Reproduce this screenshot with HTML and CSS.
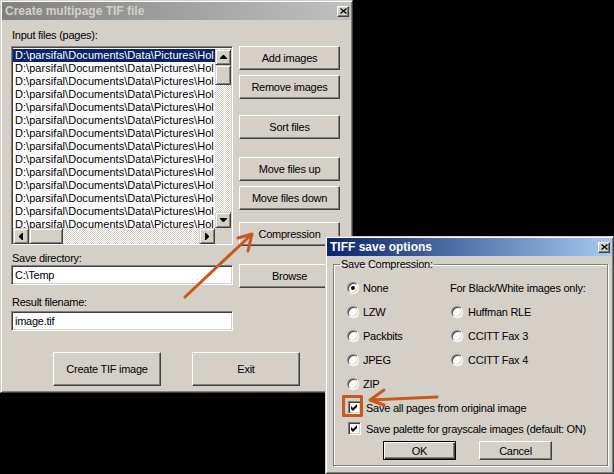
FILE: index.html
```html
<!DOCTYPE html>
<html>
<head>
<meta charset="utf-8">
<link rel="stylesheet" href="styles.css">
</head>
<body>
<div class="desktop">
  <div class="win win-main">
    <div class="titlebar inactive">
      <span class="title">Create multipage TIF file</span>
      <span class="close"><svg width="7" height="6" viewBox="0 0 7 6"><path d="M0.5 0.5 L6.5 5.5 M6.5 0.5 L0.5 5.5" stroke="#000" stroke-width="1.3"/></svg></span>
    </div>
    <div class="main-body">
      <div class="cols">
        <div class="left">
          <div class="label mt9">Input files (pages):</div>
          <div class="listbox mt4">
            <div class="items">
              <div class="item sel">D:\parsifal\Documents\Data\Pictures\Hol</div>
              <div class="item">D:\parsifal\Documents\Data\Pictures\Hol</div>
              <div class="item">D:\parsifal\Documents\Data\Pictures\Hol</div>
              <div class="item">D:\parsifal\Documents\Data\Pictures\Hol</div>
              <div class="item">D:\parsifal\Documents\Data\Pictures\Hol</div>
              <div class="item">D:\parsifal\Documents\Data\Pictures\Hol</div>
              <div class="item">D:\parsifal\Documents\Data\Pictures\Hol</div>
              <div class="item">D:\parsifal\Documents\Data\Pictures\Hol</div>
              <div class="item">D:\parsifal\Documents\Data\Pictures\Hol</div>
              <div class="item">D:\parsifal\Documents\Data\Pictures\Hol</div>
              <div class="item">D:\parsifal\Documents\Data\Pictures\Hol</div>
              <div class="item">D:\parsifal\Documents\Data\Pictures\Hol</div>
              <div class="item">D:\parsifal\Documents\Data\Pictures\Hol</div>
              <div class="item">D:\parsifal\Documents\Data\Pictures\Hol</div>
            </div>
            <div class="vscroll">
              <div class="sbtn"><svg width="7" height="4" viewBox="0 0 7 4"><path d="M3 0h1l3 3v1H0V3z"/></svg></div>
              <div class="sthumb v"></div>
              <div class="track"></div>
              <div class="sbtn"><svg width="7" height="4" viewBox="0 0 7 4"><path d="M0 0h7v1L4 4H3L0 1z"/></svg></div>
            </div>
            <div class="hscroll">
              <div class="sbtn"><svg width="4" height="7" viewBox="0 0 4 7"><path d="M0 3v1l3 3h1V0H3z"/></svg></div>
              <div class="sthumb h"></div>
              <div class="track"></div>
              <div class="sbtn"><svg width="4" height="7" viewBox="0 0 4 7"><path d="M0 0v7h1l3-3V3L1 0z"/></svg></div>
            </div>
            <div class="corner"></div>
          </div>
          <div class="label mt7">Save directory:</div>
          <div class="field">C:\Temp</div>
          <div class="label mt11">Result filename:</div>
          <div class="field mt2">image.tif</div>
        </div>
        <div class="right">
          <div class="btn mt26">Add images</div>
          <div class="btn mt5">Remove images</div>
          <div class="btn mt16">Sort files</div>
          <div class="btn mt18">Move files up</div>
          <div class="btn mt5">Move files down</div>
          <div class="btn mt12">Compression</div>
          <div class="btn mt18">Browse</div>
        </div>
      </div>
      <div class="bottom-row">
        <div class="btn big">Create TIF image</div>
        <div class="btn big">Exit</div>
      </div>
    </div>
  </div>

  <div class="win win-dialog">
    <div class="titlebar active">
      <span class="title">TIFF save options</span>
      <span class="close"><svg width="7" height="6" viewBox="0 0 7 6"><path d="M0.5 0.5 L6.5 5.5 M6.5 0.5 L0.5 5.5" stroke="#000" stroke-width="1.3"/></svg></span>
    </div>
    <div class="dlg-body">
      <fieldset class="group">
        <legend>Save Compression:</legend>
        <div class="opts">
          <div class="opt"><span class="radio on"></span>None</div>
          <div class="opt note">For Black/White images only:</div>
          <div class="opt"><span class="radio"></span>LZW</div>
          <div class="opt r"><span class="radio"></span>Huffman RLE</div>
          <div class="opt"><span class="radio"></span>Packbits</div>
          <div class="opt r"><span class="radio"></span>CCITT Fax 3</div>
          <div class="opt"><span class="radio"></span>JPEG</div>
          <div class="opt r"><span class="radio"></span>CCITT Fax 4</div>
          <div class="opt"><span class="radio"></span>ZIP</div>
          <div class="opt"></div>
        </div>
        <div class="checks">
          <div class="chk"><span class="box"><svg width="7" height="7" viewBox="0 0 7 7"><path d="M0 2L2 4L6 0V3L2 7L0 5Z"/></svg></span>Save all pages from original image</div>
          <div class="chk"><span class="box"><svg width="7" height="7" viewBox="0 0 7 7"><path d="M0 2L2 4L6 0V3L2 7L0 5Z"/></svg></span>Save palette for grayscale images (default: ON)</div>
        </div>
        <div class="dlg-btns">
          <div class="btn dlg default">OK</div>
          <div class="btn dlg">Cancel</div>
        </div>
      </fieldset>
    </div>
  </div>

  <svg class="annot" width="614" height="474" viewBox="0 0 614 474">
    <g fill="none" stroke="#c8581b" stroke-width="3" stroke-linecap="round" stroke-linejoin="round">
      <path d="M185 297 L252 234 M252 234 L238 238 M252 234 L248 251"/>
      <path d="M437 397 L370 400 M370 400 L384 390 M370 400 L384 405"/>
      <rect x="343.5" y="396.5" width="18" height="19" stroke-linecap="butt"/>
    </g>
  </svg>
</div>
</body>
</html>
```

FILE: styles.css
```css
html, body {
  margin: 0;
  padding: 0;
}
body {
  background: #000;
  width: 614px;
  height: 474px;
  overflow: hidden;
  font-family: "Liberation Sans", Arial, sans-serif;
  font-size: 11px;
  letter-spacing: -0.25px;
  color: #000;
}
.desktop {
  position: relative;
  width: 614px;
  height: 474px;
}
.win {
  position: absolute;
  box-sizing: border-box;
  background: #d4d0c8;
  border: 1px solid;
  border-color: #d4d0c8 #404040 #404040 #d4d0c8;
  box-shadow: inset 1px 1px #fff, inset -1px -1px #808080;
  padding: 1px;
  display: flex;
  flex-direction: column;
}
.win-main {
  left: 0;
  top: 0;
  width: 353px;
  height: 393px;
}
.win-dialog {
  left: 325px;
  top: 236px;
  width: 289px;
  height: 238px;
}
.titlebar {
  height: 18px;
  flex: none;
  display: flex;
  align-items: center;
  justify-content: space-between;
  padding: 0 2px 0 3px;
  font-weight: bold;
  font-size: 12px;
  letter-spacing: 0;
  white-space: nowrap;
}
.titlebar.inactive {
  background: linear-gradient(to right, #808080, #c0c0c0);
  color: #d4d0c8;
}
.titlebar.active {
  background: linear-gradient(to right, #0a246a, #a6caf0);
  color: #fff;
}
.close {
  width: 12px;
  height: 11px;
  box-sizing: border-box;
  background: #d4d0c8;
  border: 1px solid;
  border-color: #fff #404040 #404040 #fff;
  box-shadow: inset -1px -1px #808080;
  display: flex;
  align-items: center;
  justify-content: center;
}
.close svg { display: block; }

/* main window */
.main-body {
  padding-left: 9px;
}
.cols {
  display: flex;
  gap: 6px;
  align-items: flex-start;
}
.left {
  width: 222px;
  display: flex;
  flex-direction: column;
}
.right {
  width: 101px;
  display: flex;
  flex-direction: column;
}
.label {
  height: 13px;
  line-height: 13px;
  padding-left: 1px;
  white-space: nowrap;
}
.mt2 { margin-top: 2px; }
.mt4 { margin-top: 4px; }
.mt5 { margin-top: 5px; }
.mt7 { margin-top: 7px; }
.mt9 { margin-top: 9px; }
.mt11 { margin-top: 11px; }
.mt12 { margin-top: 12px; }
.mt16 { margin-top: 16px; }
.mt18 { margin-top: 18px; }
.mt26 { margin-top: 26px; }

.btn {
  box-sizing: border-box;
  background: #d4d0c8;
  border: 1px solid;
  border-color: #fff #404040 #404040 #fff;
  box-shadow: inset -1px -1px #808080;
  display: flex;
  align-items: center;
  justify-content: center;
  height: 24px;
  white-space: nowrap;
}
.btn.big {
  width: 108px;
  height: 34px;
}
.bottom-row {
  display: flex;
  gap: 31px;
  margin-top: 21px;
  padding-left: 42px;
}

.field {
  height: 20px;
  box-sizing: border-box;
  background: #fff;
  border: 1px solid;
  border-color: #808080 #fff #fff #808080;
  box-shadow: inset 1px 1px #404040, inset -1px -1px #d4d0c8;
  padding: 0 3px;
  display: flex;
  align-items: center;
  white-space: nowrap;
}

.listbox {
  width: 222px;
  height: 199px;
  box-sizing: border-box;
  background: #fff;
  border: 1px solid;
  border-color: #808080 #fff #fff #808080;
  box-shadow: inset 1px 1px #404040, inset -1px -1px #d4d0c8;
  padding: 2px 1px 0 1px;
  display: grid;
  grid-template-columns: 1fr 16px;
  grid-template-rows: 1fr 16px;
}
.items {
  overflow: hidden;
  min-width: 0;
  min-height: 0;
}
.item {
  height: 13px;
  line-height: 13px;
  padding-left: 2px;
  white-space: nowrap;
  overflow: hidden;
  letter-spacing: 0.05px;
}
.item.sel {
  background: #0a246a;
  color: #fff;
}
.vscroll {
  display: flex;
  flex-direction: column;
  min-height: 0;
}
.hscroll {
  display: flex;
  min-width: 0;
}
.track {
  flex: 1;
  background: repeating-conic-gradient(#d4d0c8 0 25%, #fff 0 50%) 0 0 / 2px 2px;
}
.sbtn, .sthumb {
  box-sizing: border-box;
  background: #d4d0c8;
  border: 1px solid;
  border-color: #d4d0c8 #404040 #404040 #d4d0c8;
  box-shadow: inset 1px 1px #fff, inset -1px -1px #808080;
  flex: none;
}
.sbtn {
  width: 16px;
  height: 16px;
  display: flex;
  align-items: center;
  justify-content: center;
}
.sbtn svg { display: block; }
.sthumb.v {
  width: 16px;
  height: 20px;
}
.sthumb.h {
  width: 34px;
  height: 16px;
}
.corner {
  background: #d4d0c8;
}

/* dialog */
.dlg-body {
  padding: 2px 4px 0 6px;
}
.group {
  margin: 0;
  padding: 0 0 5px 0;
  border: 1px solid #808080;
  box-shadow: 1px 1px 0 #fff, inset 1px 1px 0 #fff;
  min-width: 0;
}
.group legend {
  margin-left: 6px;
  padding: 0 1px;
  line-height: 13px;
  height: 13px;
}
.opts {
  display: grid;
  grid-template-columns: 103px 1fr;
  grid-auto-rows: 24px;
  margin-top: 5px;
  padding-left: 13px;
}
.opt {
  display: flex;
  align-items: center;
  white-space: nowrap;
}
.opt.r .radio {
  margin-left: 1px;
  margin-right: 5px;
}
.radio {
  width: 12px;
  height: 12px;
  box-sizing: border-box;
  border-radius: 50%;
  background: #fff;
  border: 1px solid;
  border-color: #808080 #fff #fff #808080;
  box-shadow: inset 1px 1px #404040, inset -1px -1px #d4d0c8;
  margin-right: 4px;
  display: flex;
  align-items: center;
  justify-content: center;
  flex: none;
}
.radio.on::after {
  content: "";
  width: 4px;
  height: 4px;
  border-radius: 50%;
  background: #000;
}
.checks {
  margin-top: 1px;
  padding-left: 14px;
}
.chk {
  height: 21px;
  display: flex;
  align-items: center;
  white-space: nowrap;
}
.box {
  width: 13px;
  height: 13px;
  box-sizing: border-box;
  background: #fff;
  border: 1px solid;
  border-color: #808080 #fff #fff #808080;
  box-shadow: inset 1px 1px #404040, inset -1px -1px #d4d0c8;
  margin-right: 5px;
  display: flex;
  align-items: center;
  justify-content: center;
  flex: none;
}
.box svg { display: block; }
.dlg-btns {
  display: flex;
  gap: 23px;
  margin-top: 2px;
  padding-left: 49px;
}
.btn.dlg {
  width: 73px;
  height: 19px;
}
.btn.default {
  border-color: #000;
  box-shadow: inset 1px 1px #fff, inset -1px -1px #404040, inset -2px -2px #808080;
}

.annot {
  position: absolute;
  left: 0;
  top: 0;
  pointer-events: none;
}
```
